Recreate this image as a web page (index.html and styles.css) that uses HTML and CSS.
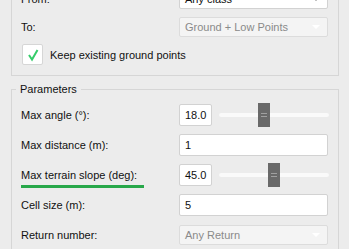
FILE: index.html
```html
<!DOCTYPE html>
<html lang="en">
<head>
    <meta charset="UTF-8">
    <meta name="viewport" content="width=device-width, initial-scale=1.0">
    <title>Ground filter</title>
    <link rel="stylesheet" href="styles.css">
</head>
<body>
    <div class="dialog">
        <div class="group classes">
            <div class="form-grid">
                <label>From:</label>
                <div class="combo">
                    <span>Any class</span>
                    <i class="arrow dark"></i>
                </div>

                <label>To:</label>
                <div class="combo disabled">
                    <span>Ground + Low Points</span>
                    <i class="arrow"></i>
                </div>
            </div>

            <div class="check-row">
                <span class="checkbox">
                    <svg width="21" height="21" viewBox="0 0 21 21">
                        <polyline points="7,11 10,15.5 15.5,6" fill="none" stroke="#35cc6a" stroke-width="2"/>
                    </svg>
                </span>
                <span>Keep existing ground points</span>
            </div>
        </div>

        <fieldset class="group params">
            <legend>Parameters</legend>
            <div class="form-grid tall">
                <label>Max angle (°):</label>
                <div class="field-slider">
                    <div class="spinbox">18.0</div>
                    <div class="slider">
                        <div class="groove"></div>
                        <div class="handle" style="left: 39px"></div>
                    </div>
                </div>

                <label>Max distance (m):</label>
                <div class="textbox">1</div>

                <label><span class="marked">Max terrain slope (deg):</span></label>
                <div class="field-slider">
                    <div class="spinbox">45.0</div>
                    <div class="slider">
                        <div class="groove"></div>
                        <div class="handle" style="left: 49px"></div>
                    </div>
                </div>

                <label>Cell size (m):</label>
                <div class="textbox">5</div>

                <label>Return number:</label>
                <div class="combo disabled">
                    <span>Any Return</span>
                    <i class="arrow"></i>
                </div>
            </div>
        </fieldset>
    </div>
</body>
</html>
```

FILE: styles.css
```css
body {
    margin: 0;
    background-color: #ececec;
    font-family: 'Liberation Sans', Arial, sans-serif;
    font-size: 11px;
    color: #111;
    overflow: hidden;
}

.dialog {
    margin-top: -22px;
    padding: 0 10px 0 11px;
}

.group {
    border: 1px solid #d6d6d6;
    padding: 10px 10px 10px 9px;
}

.form-grid {
    display: grid;
    grid-template-columns: 1fr 149px;
    row-gap: 8px;
    align-items: center;
}

.form-grid.tall {
    grid-auto-rows: 22px;
}

label {
    line-height: 13px;
}

.combo,
.textbox,
.spinbox {
    box-sizing: border-box;
    height: 20px;
    background-color: #fff;
    border: 1px solid #d2d2d2;
    border-radius: 2px;
    padding: 0 5px;
    display: flex;
    align-items: center;
}

.textbox,
.spinbox {
    height: 22px;
}

.combo {
    justify-content: space-between;
}

.combo.disabled {
    background-color: #f4f4f4;
    border-color: #dcdcdc;
    color: #8a8a8a;
}

.arrow {
    width: 0;
    height: 0;
    margin-right: 2px;
    border-left: 4px solid transparent;
    border-right: 4px solid transparent;
    border-top: 4px solid #fff;
}

.arrow.dark {
    border-top-color: #888;
}

.check-row {
    display: flex;
    align-items: center;
    gap: 7px;
    margin-top: 7px;
    margin-left: 1px;
}

.checkbox {
    box-sizing: border-box;
    width: 21px;
    height: 21px;
    background-color: #fff;
    border: 1px solid #d6d6d6;
    border-radius: 2px;
    display: flex;
}

.checkbox svg {
    margin: -1px;
}

.params {
    margin: 7px 0 0;
    padding: 8px 10px 10px 9px;
}

.params legend {
    padding: 0 4px;
    margin-left: -5px;
    line-height: 13px;
}

.field-slider {
    display: flex;
    align-items: center;
}

.spinbox {
    width: 33px;
    flex: none;
}

.slider {
    position: relative;
    flex: 1;
    height: 24px;
    margin-left: 7px;
    margin-right: -1px;
    display: flex;
    align-items: center;
}

.groove {
    flex: 1;
    height: 4px;
    border-radius: 2px;
    background-color: #fafafa;
}

.handle {
    position: absolute;
    top: 0;
    width: 12px;
    height: 24px;
    background-color: #696969;
}

.handle::before,
.handle::after {
    content: "";
    position: absolute;
    left: 3px;
    width: 6px;
    height: 1px;
    background-color: #a0a0a0;
}

.handle::before {
    top: 10px;
}

.handle::after {
    top: 13px;
}

.marked {
    display: inline-block;
    padding-right: 7px;
    padding-bottom: 3px;
    margin-bottom: -9px;
    border-bottom: 3px solid #28a84a;
}
```
